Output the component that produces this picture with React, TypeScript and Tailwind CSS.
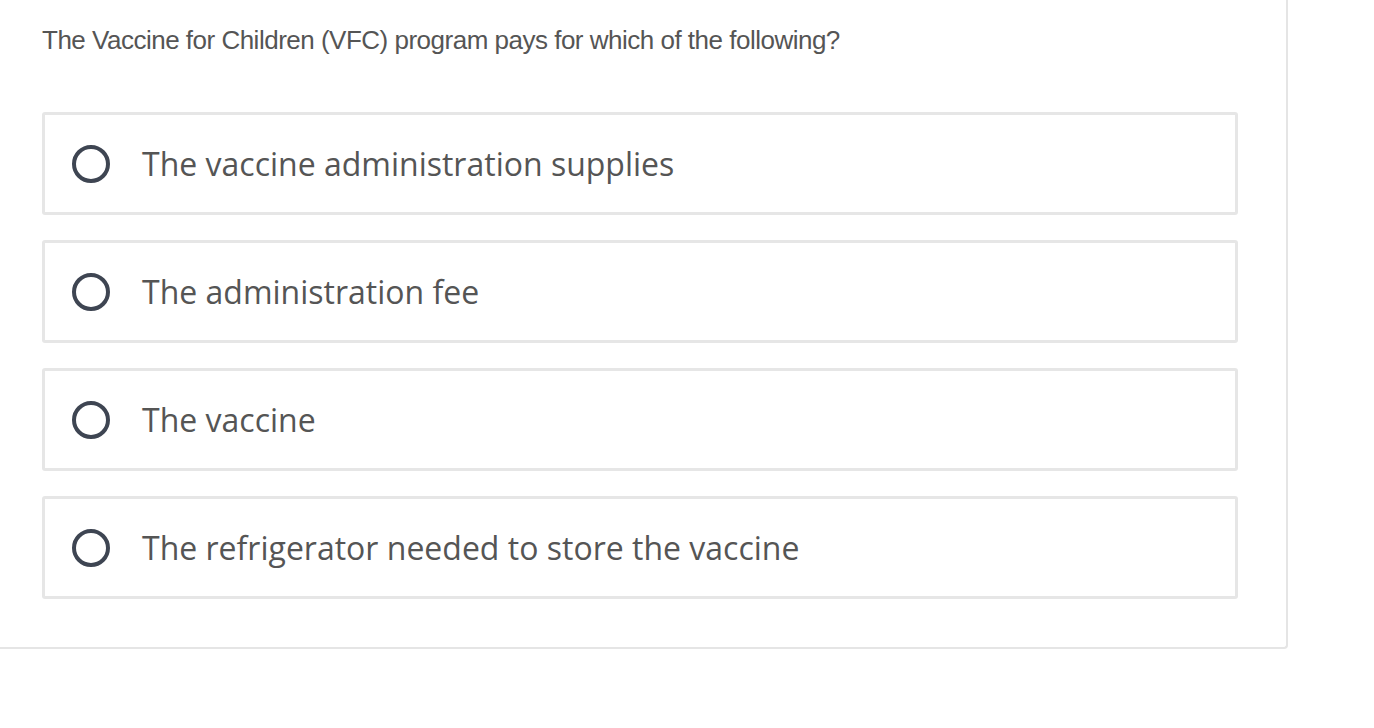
import React from "react";

const options = [
  "The vaccine administration supplies",
  "The administration fee",
  "The vaccine",
  "The refrigerator needed to store the vaccine",
];

export default function App() {
  return (
    <div className="w-[1374px] h-[728px] bg-white overflow-hidden">
      <div className="w-[1288px] h-[649px] border-r-2 border-b-2 border-[#e5e5e5] rounded-br-[4px] pl-[42px] pt-[24px]">
        <h1
          className="text-[26px] leading-[32px] text-[#555555] tracking-[-0.5px]"
          style={{ fontFamily: '"Liberation Sans", Arial, sans-serif' }}
        >
          The Vaccine for Children (VFC) program pays for which of the following?
        </h1>
        <div className="mt-[56px] flex flex-col gap-[25px]">
          {options.map((o) => (
            <label
              key={o}
              className="w-[1196px] h-[103px] border-[3px] border-[#e6e6e6] rounded-[3px] flex items-center pl-[27px]"
            >
              <span className="w-[38px] h-[38px] rounded-full border-[4px] border-[#3e4552] shrink-0" />
              <span
                className="ml-[32px] text-[32px] text-[#555555]"
                style={{ fontFamily: '"Open Sans", sans-serif' }}
              >
                {o}
              </span>
            </label>
          ))}
        </div>
      </div>
    </div>
  );
}
